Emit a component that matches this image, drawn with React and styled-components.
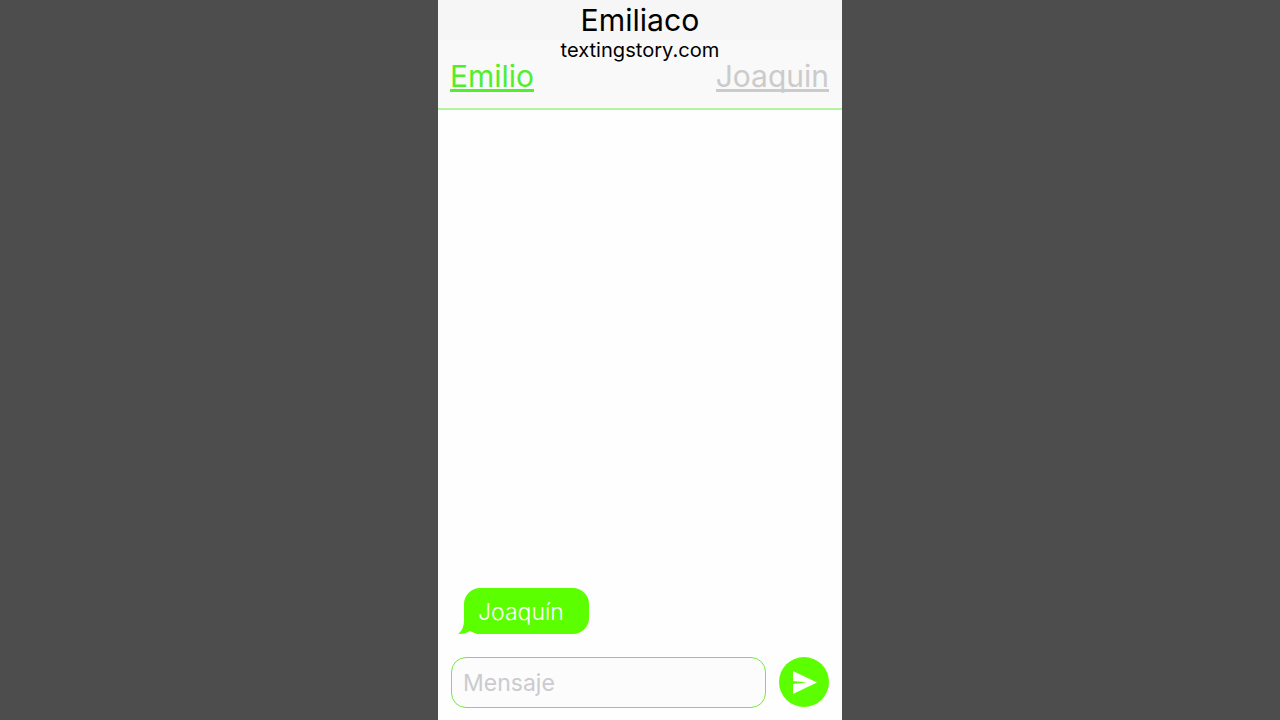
import React from 'react';
import styled, { createGlobalStyle } from 'styled-components';

const GlobalStyle = createGlobalStyle`
  html, body {
    margin: 0;
    height: 100%;
    background: #4d4d4d;
    font-family: Inter, "Liberation Sans", sans-serif;
  }
`;

const Page = styled.div`
  display: flex;
  justify-content: center;
  height: 720px;
  overflow: hidden;
`;

const Phone = styled.div`
  display: flex;
  flex-direction: column;
  width: 404px;
  background: #fefefe;
`;

const Header = styled.div`
  height: 108px;
  background: #f9f9f9;
  border-bottom: 2px solid #b4f49c;
  flex-shrink: 0;
`;

const TitleBar = styled.div`
  height: 40px;
  background: #f6f6f6;
  text-align: center;
`;

const Title = styled.div`
  font-size: 30.2px;
  line-height: 40px;
  color: #000;
`;

const Watermark = styled.div`
  font-size: 20.1px;
  line-height: 20px;
  text-align: center;
  color: #000;
`;

const Names = styled.div`
  display: flex;
  justify-content: space-between;
  padding: 0 13px 0 12px;
`;

const Name = styled.span`
  font-size: 30px;
  line-height: 32px;
  color: ${(p) => (p.$active ? '#52ee2e' : '#cbcbcb')};
  border-bottom: 3px solid ${(p) => (p.$active ? '#52ee2e' : '#cbcbcb')};
  height: 29px;
`;

const Messages = styled.div`
  flex: 1;
  display: flex;
  flex-direction: column;
  align-items: flex-start;
  justify-content: flex-end;
  padding: 0 0 23px 26px;
`;

const Bubble = styled.div`
  position: relative;
  width: 125px;
  box-sizing: border-box;
  height: 46px;
  padding-left: 14px;
  border-radius: 16px;
  background: #5cff00;
  color: #fff;
  font-size: 23px;
  font-weight: 300;
  line-height: 48px;
`;

const BubbleTail = styled.svg`
  position: absolute;
  left: -6px;
  bottom: 0;
  width: 20px;
  height: 14px;
`;

const InputBar = styled.div`
  display: flex;
  align-items: flex-start;
  gap: 13px;
  padding: 0 13px 12px 12.5px;
`;

const InputBox = styled.div`
  flex: 1;
  box-sizing: border-box;
  height: 51px;
  padding: 0 11.5px;
  border: 1px solid #6fec3c;
  border-radius: 15px;
  background: #fcfcfc;
  color: #cbcbcf;
  font-size: 23px;
  line-height: 50px;
`;

const SendButton = styled.div`
  display: flex;
  align-items: center;
  justify-content: center;
  width: 50px;
  height: 50px;
  border-radius: 50%;
  background: #5cff00;
  flex-shrink: 0;
`;

const SendIcon = styled.svg`
  width: 24px;
  height: 23px;
  margin-left: 2px;
`;

export default function App() {
  return (
    <Page>
      <GlobalStyle />
      <Phone>
        <Header>
          <TitleBar>
            <Title>Emiliaco</Title>
          </TitleBar>
          <Watermark>textingstory.com</Watermark>
          <Names>
            <Name $active>Emilio</Name>
            <Name>Joaquin</Name>
          </Names>
        </Header>
        <Messages>
          <Bubble>
            Joaquín
            <BubbleTail viewBox="0 0 20 14">
              <path d="M6 0 C6 6 4 11 0 14 C5 14 9 13 12 11 L20 14 L20 0 Z" fill="#5cff00" />
            </BubbleTail>
          </Bubble>
        </Messages>
        <InputBar>
          <InputBox>Mensaje</InputBox>
          <SendButton>
            <SendIcon viewBox="0 0 24 23">
              <path d="M0 0 L24 11.5 L0 23 L0 13 L14 11.5 L0 10 Z" fill="#fff" />
            </SendIcon>
          </SendButton>
        </InputBar>
      </Phone>
    </Page>
  );
}
